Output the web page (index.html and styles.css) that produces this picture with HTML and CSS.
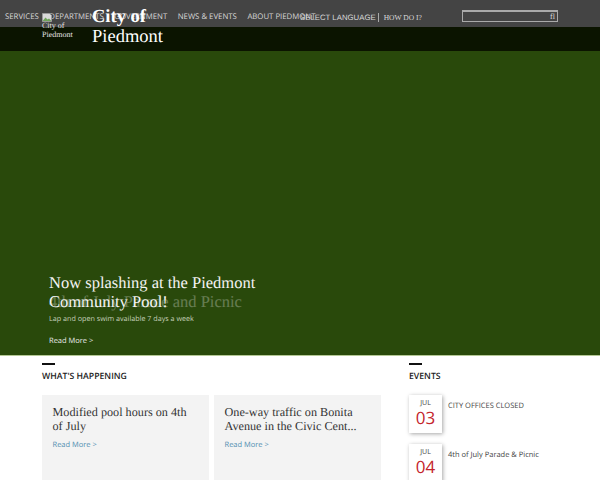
FILE: index.html
```html
<!DOCTYPE html>
<html lang="en">
<head>
    <meta charset="UTF-8">
    <meta name="viewport" content="width=device-width, initial-scale=1.0">
    <title>City of Piedmont</title>
    <link rel="stylesheet" href="styles.css">
</head>
<body>
<header class="topbar">
    <nav class="main-nav">
        <a>SERVICES</a>
        <a>DEPARTMENTS</a>
        <a>GOVERNMENT</a>
        <a>NEWS &amp; EVENTS</a>
        <a>ABOUT PIEDMONT</a>
    </nav>
    <div class="lang">SELECT LANGUAGE</div>
    <div class="howdo">HOW DO I?</div>
    <div class="search"><span class="search-icon">fl</span></div>
</header>

<div class="logo">
    <svg class="broken-img" width="10" height="9" viewBox="0 0 10 9">
        <path d="M0.500 0.500h7l2 2v6h-9z" fill="#d9d9d9" stroke="#9a9a9a"/>
        <path d="M1 7.500l2.500-3 2 2 1.500-1 2 2v0.500h-8z" fill="#6fa35a"/>
    </svg>
    <div class="logo-alt">City of<br>Piedmont</div>
</div>
<div class="site-name"><strong>City of</strong><br>Piedmont</div>

<section class="hero">
    <div class="hero-band"></div>
    <div class="slide">
        <h1 class="slide-ghost">4th of July Parade and Picnic</h1>
        <h1 class="slide-title">Now splashing at the Piedmont Community Pool!</h1>
        <p class="slide-text">Lap and open swim available 7 days a week</p>
        <a class="slide-link">Read More &gt;</a>
    </div>
</section>

<main class="content">
    <section class="news">
        <h2 class="section-title">WHAT'S HAPPENING</h2>
        <div class="cards">
            <article class="card">
                <h3>Modified pool hours on 4th of July</h3>
                <a>Read More &gt;</a>
            </article>
            <article class="card">
                <h3>One-way traffic on Bonita Avenue in the Civic Cent...</h3>
                <a>Read More &gt;</a>
            </article>
        </div>
    </section>
    <aside class="events">
        <h2 class="section-title">EVENTS</h2>
        <div class="event">
            <div class="date"><span class="month">JUL</span><span class="day">03</span></div>
            <div class="event-name">CITY OFFICES CLOSED</div>
        </div>
        <div class="event">
            <div class="date"><span class="month">JUL</span><span class="day">04</span></div>
            <div class="event-name">4th of July Parade &amp; Picnic</div>
        </div>
    </aside>
</main>
</body>
</html>
```

FILE: styles.css
```css
body {
    margin: 0;
    height: 480px;
    overflow: hidden;
    position: relative;
    font-family: 'Open Sans', sans-serif;
    text-rendering: geometricPrecision;
    background: #fff;
}

.topbar {
    height: 27px;
    padding-top: 7px;
    box-sizing: border-box;
    background: #444444;
    display: flex;
    align-items: center;
    color: #d8d8d8;
    font-size: 7.800px;
    position: relative;
}

.main-nav {
    display: flex;
    gap: 10.500px;
    padding-left: 5px;
    width: 300px;
    white-space: nowrap;
    flex-shrink: 0;
    box-sizing: border-box;
}

.lang {
    font-family: 'Liberation Sans', sans-serif;
    font-size: 7.800px;
    white-space: nowrap;
    border-right: 1px solid #aaa;
    padding-right: 2px;
    line-height: 9px;
}

.howdo {
    font-family: 'Liberation Serif', serif;
    font-size: 7.500px;
    margin-left: 5px;
    white-space: nowrap;
}

.search {
    position: absolute;
    top: 10px;
    left: 462px;
    width: 94px;
    height: 9px;
    border: 1px solid #aaa;
    border-top-width: 2px;
    text-align: right;
}

.search-icon {
    font-family: 'Liberation Serif', serif;
    font-size: 8px;
    line-height: 9px;
    display: block;
    padding-right: 2px;
}

.logo {
    position: absolute;
    z-index: 2;
    top: 13px;
    left: 42px;
    color: #e4e4e4;
    font-family: 'Liberation Serif', serif;
    font-size: 8px;
    line-height: 9px;
}

.broken-img {
    display: block;
}

.logo-alt {
    margin-top: -1px;
}

.site-name {
    position: absolute;
    z-index: 2;
    top: 7px;
    left: 92px;
    font-family: 'Liberation Serif', serif;
    font-size: 18.500px;
    line-height: 20px;
    color: #fff;
}

.hero {
    height: 328px;
    background: #29490b;
    position: relative;
    border-bottom: 1px solid #b5c896;
}

.hero-band {
    height: 24px;
    background: #0b1400;
}

.slide {
    position: absolute;
    left: 49px;
    top: 246px;
    width: 240px;
    color: #f4f4f4;
}

.slide-title, .slide-ghost {
    margin: 0;
    font-family: 'Liberation Serif', serif;
    font-weight: normal;
    font-size: 16.500px;
    line-height: 19px;
}

.slide-ghost {
    position: absolute;
    top: 19px;
    left: 0;
    opacity: 0.3;
    white-space: nowrap;
}

.slide-title {
    position: relative;
}

.slide-text {
    margin: 3px 0 0;
    font-size: 7.200px;
    line-height: 11px;
    color: #c5d0ba;
}

.slide-link {
    display: block;
    margin-top: 11px;
    font-size: 7.500px;
    line-height: 11px;
    color: #ececec;
}

.content {
    display: flex;
    padding: 5px 0 0 42px;
}

.news {
    width: 367px;
    flex-shrink: 0;
}

.section-title {
    margin: 0 0 13px;
    font-size: 8.700px;
    line-height: 12px;
    font-weight: 600;
    color: #222;
    padding-top: 2px;
}

.section-title::before {
    content: '';
    display: block;
    width: 13px;
    height: 2px;
    background: #111;
    margin-bottom: 5px;
}

.cards {
    display: flex;
    gap: 5px;
    width: 339px;
}

.card {
    flex: 1;
    height: 120px;
    padding: 10px 10.500px;
    box-sizing: border-box;
    background: #f3f3f3;
}

.card h3 {
    margin: 0 0 7px;
    font-family: 'Liberation Serif', serif;
    font-weight: normal;
    font-size: 12.200px;
    line-height: 14px;
    color: #333;
}

.card a {
    display: block;
    font-size: 7.500px;
    line-height: 11px;
    color: #4f8db0;
}

.event {
    display: flex;
    gap: 6px;
    height: 49px;
}

.date {
    width: 33px;
    height: 38px;
    background: #fff;
    box-shadow: 1px 1px 4px rgba(0,0,0,0.35);
    display: flex;
    flex-direction: column;
    align-items: center;
    padding-top: 4px;
    box-sizing: border-box;
}

.month {
    font-size: 7px;
    line-height: 9px;
    color: #444;
}

.day {
    font-size: 17px;
    line-height: 19px;
    color: #c4242b;
}

.event-name {
    font-size: 7.500px;
    line-height: 11px;
    color: #444;
    padding-top: 6px;
}
```
